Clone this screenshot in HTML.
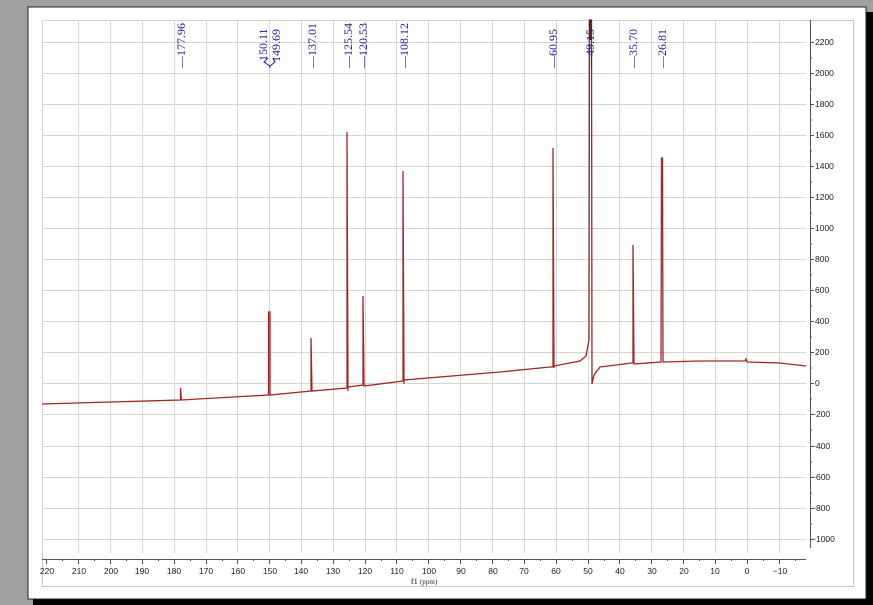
<!DOCTYPE html>
<html><head><meta charset="utf-8"><style>
html,body{margin:0;padding:0;background:#a0a0a0;width:873px;height:605px;overflow:hidden}
svg{display:block}
</style></head><body>
<svg width="873" height="605" viewBox="0 0 873 605" xmlns="http://www.w3.org/2000/svg" font-family="Liberation Sans, sans-serif">
<rect x="0" y="0" width="873" height="605" fill="#a0a0a0"/>
<rect x="33" y="12" width="840" height="593" fill="#000"/>
<rect x="28" y="7" width="838" height="592" fill="#fff" stroke="#222" stroke-width="1"/>
<rect x="42.5" y="20.5" width="811" height="566" fill="none" stroke="#c8c8c8"/>
<g stroke="#d6d6d6" stroke-width="1">
<line x1="78.5" y1="20" x2="78.5" y2="553"/><line x1="110.5" y1="20" x2="110.5" y2="553"/>
<line x1="142.5" y1="20" x2="142.5" y2="553"/><line x1="174.5" y1="20" x2="174.5" y2="553"/>
<line x1="206.5" y1="20" x2="206.5" y2="553"/><line x1="237.5" y1="20" x2="237.5" y2="553"/>
<line x1="269.5" y1="20" x2="269.5" y2="553"/><line x1="301.5" y1="20" x2="301.5" y2="553"/>
<line x1="333.5" y1="20" x2="333.5" y2="553"/><line x1="365.5" y1="20" x2="365.5" y2="553"/>
<line x1="396.5" y1="20" x2="396.5" y2="553"/><line x1="428.5" y1="20" x2="428.5" y2="553"/>
<line x1="460.5" y1="20" x2="460.5" y2="553"/><line x1="492.5" y1="20" x2="492.5" y2="553"/>
<line x1="524.5" y1="20" x2="524.5" y2="553"/><line x1="556.5" y1="20" x2="556.5" y2="553"/>
<line x1="588.5" y1="20" x2="588.5" y2="553"/><line x1="619.5" y1="20" x2="619.5" y2="553"/>
<line x1="651.5" y1="20" x2="651.5" y2="553"/><line x1="683.5" y1="20" x2="683.5" y2="553"/>
<line x1="715.5" y1="20" x2="715.5" y2="553"/><line x1="747.5" y1="20" x2="747.5" y2="553"/>
<line x1="779.5" y1="20" x2="779.5" y2="553"/>
<line x1="42" y1="42.5" x2="806" y2="42.5"/><line x1="42" y1="73.5" x2="806" y2="73.5"/>
<line x1="42" y1="104.5" x2="806" y2="104.5"/><line x1="42" y1="135.5" x2="806" y2="135.5"/>
<line x1="42" y1="166.5" x2="806" y2="166.5"/><line x1="42" y1="197.5" x2="806" y2="197.5"/>
<line x1="42" y1="228.5" x2="806" y2="228.5"/><line x1="42" y1="259.5" x2="806" y2="259.5"/>
<line x1="42" y1="290.5" x2="806" y2="290.5"/><line x1="42" y1="321.5" x2="806" y2="321.5"/>
<line x1="42" y1="352.5" x2="806" y2="352.5"/><line x1="42" y1="383.5" x2="806" y2="383.5"/>
<line x1="42" y1="414.5" x2="806" y2="414.5"/><line x1="42" y1="446.5" x2="806" y2="446.5"/>
<line x1="42" y1="477.5" x2="806" y2="477.5"/><line x1="42" y1="508.5" x2="806" y2="508.5"/>
<line x1="42" y1="539.5" x2="806" y2="539.5"/>
<line x1="42" y1="20.5" x2="806" y2="20.5"/><line x1="42.5" y1="20" x2="42.5" y2="553"/>
</g>
<path fill="none" stroke="#a02828" stroke-width="1.3" d="M42 404 L180.5 400 L180.5 388 L181.5 400 L268.5 395 L268.5 312 L270 312 L270 395 L311 391 L311 338 L312 391 L347 388 L347 132 L348 391 L348 387 L363 385 L363 296 L364 386 L403 381 L403 171 L404 384 L404 380 L500 372 L550 367 L553 367 L553 148 L554 368 L554 366 L580 361 L586 356 L589 340 L589.5 20 L591.5 20 L592 384 L594 375 L600 367 L632 363 L633 363 L633 245 L634 364 L661 362 L661.5 158 L662.5 158 L663 362 L700 361 L745 361 L746 359 L747 362 L780 363 L806 366"/>
<line x1="590.5" y1="20" x2="590.5" y2="40" stroke="#6a2020" stroke-width="3"/>
<g stroke="#555" stroke-width="1">
<line x1="810.5" y1="20" x2="810.5" y2="548"/>
<line x1="42" y1="559.5" x2="806" y2="559.5"/>
</g>
<g fill="#222" font-size="8.5">
<text x="815" y="45">2200</text><text x="815" y="76">2000</text><text x="815" y="107">1800</text>
<text x="815" y="138">1600</text><text x="815" y="169">1400</text><text x="815" y="200">1200</text>
<text x="815" y="231">1000</text><text x="815" y="262">800</text><text x="815" y="293">600</text>
<text x="815" y="324">400</text><text x="815" y="355">200</text><text x="815" y="386">0</text>
<text x="811" y="417">−200</text><text x="811" y="449">−400</text><text x="811" y="480">−600</text>
<text x="811" y="511">−800</text><text x="811" y="542">−1000</text>
</g>
<g stroke="#555">
<path d="M810 42.5h4M810 73.5h4M810 104.5h4M810 135.5h4M810 166.5h4M810 197.5h4M810 228.5h4M810 259.5h4M810 290.5h4M810 321.5h4M810 352.5h4M810 383.5h4M810 414.5h4M810 446.5h4M810 477.5h4M810 508.5h4M810 539.5h4"/>
<path d="M810 58h2M810 89h2M810 120h2M810 151h2M810 182h2M810 213h2M810 244h2M810 275h2M810 306h2M810 337h2M810 368h2M810 399h2M810 430h2M810 462h2M810 493h2M810 524h2"/>
<path d="M46.5 559v5M78.5 559v5M110.5 559v5M142.5 559v5M174.5 559v5M206.5 559v5M237.5 559v5M269.5 559v5M301.5 559v5M333.5 559v5M365.5 559v5M396.5 559v5M428.5 559v5M460.5 559v5M492.5 559v5M524.5 559v5M556.5 559v5M588.5 559v5M619.5 559v5M651.5 559v5M683.5 559v5M715.5 559v5M747.5 559v5M779.5 559v5"/>
<path d="M62.5 559v2M94.5 559v2M126.5 559v2M158.5 559v2M190.5 559v2M222.5 559v2M253.5 559v2M285.5 559v2M317.5 559v2M349.5 559v2M381.5 559v2M412.5 559v2M444.5 559v2M476.5 559v2M508.5 559v2M540.5 559v2M572.5 559v2M604.5 559v2M635.5 559v2M667.5 559v2M699.5 559v2M731.5 559v2M763.5 559v2M795.5 559v2"/>
</g>
<g fill="#222" font-size="8.5" text-anchor="middle">
<text x="47" y="574">220</text><text x="79" y="574">210</text><text x="111" y="574">200</text>
<text x="142" y="574">190</text><text x="174" y="574">180</text><text x="206" y="574">170</text>
<text x="238" y="574">160</text><text x="270" y="574">150</text><text x="301" y="574">140</text>
<text x="333" y="574">130</text><text x="365" y="574">120</text><text x="397" y="574">110</text>
<text x="429" y="574">100</text><text x="461" y="574">90</text><text x="493" y="574">80</text>
<text x="524" y="574">70</text><text x="556" y="574">60</text><text x="588" y="574">50</text>
<text x="620" y="574">40</text><text x="652" y="574">30</text><text x="684" y="574">20</text>
<text x="715" y="574">10</text><text x="747" y="574">0</text><text x="780" y="574">−10</text>
<text x="424" y="584" font-family="Liberation Serif, serif">f1 <tspan font-size="7">(ppm)</tspan></text>
</g>
<g fill="#1a1aa0" font-size="12" font-family="Liberation Serif, serif">
<text transform="translate(185,68) rotate(-90)">—177.96</text>
<text transform="translate(267,61) rotate(-90)">150.11</text>
<text transform="translate(280,62) rotate(-90)">149.69</text>
<text transform="translate(316,68) rotate(-90)">—137.01</text>
<text transform="translate(352,68) rotate(-90)">—125.54</text>
<text transform="translate(367,68) rotate(-90)">—120.53</text>
<text transform="translate(408,68) rotate(-90)">—108.12</text>
<text transform="translate(557,68) rotate(-90)">—60.95</text>
<text transform="translate(594,68) rotate(-90)">—49.15</text>
<text transform="translate(637,68) rotate(-90)">—35.70</text>
<text transform="translate(666,68) rotate(-90)">—26.81</text>
</g>
<path d="M268 58 L264 62 L270 66 L275 62 L273 58 M270 66 V68" fill="none" stroke="#1a1aa0" stroke-width="1"/>
</svg>
</body></html>
